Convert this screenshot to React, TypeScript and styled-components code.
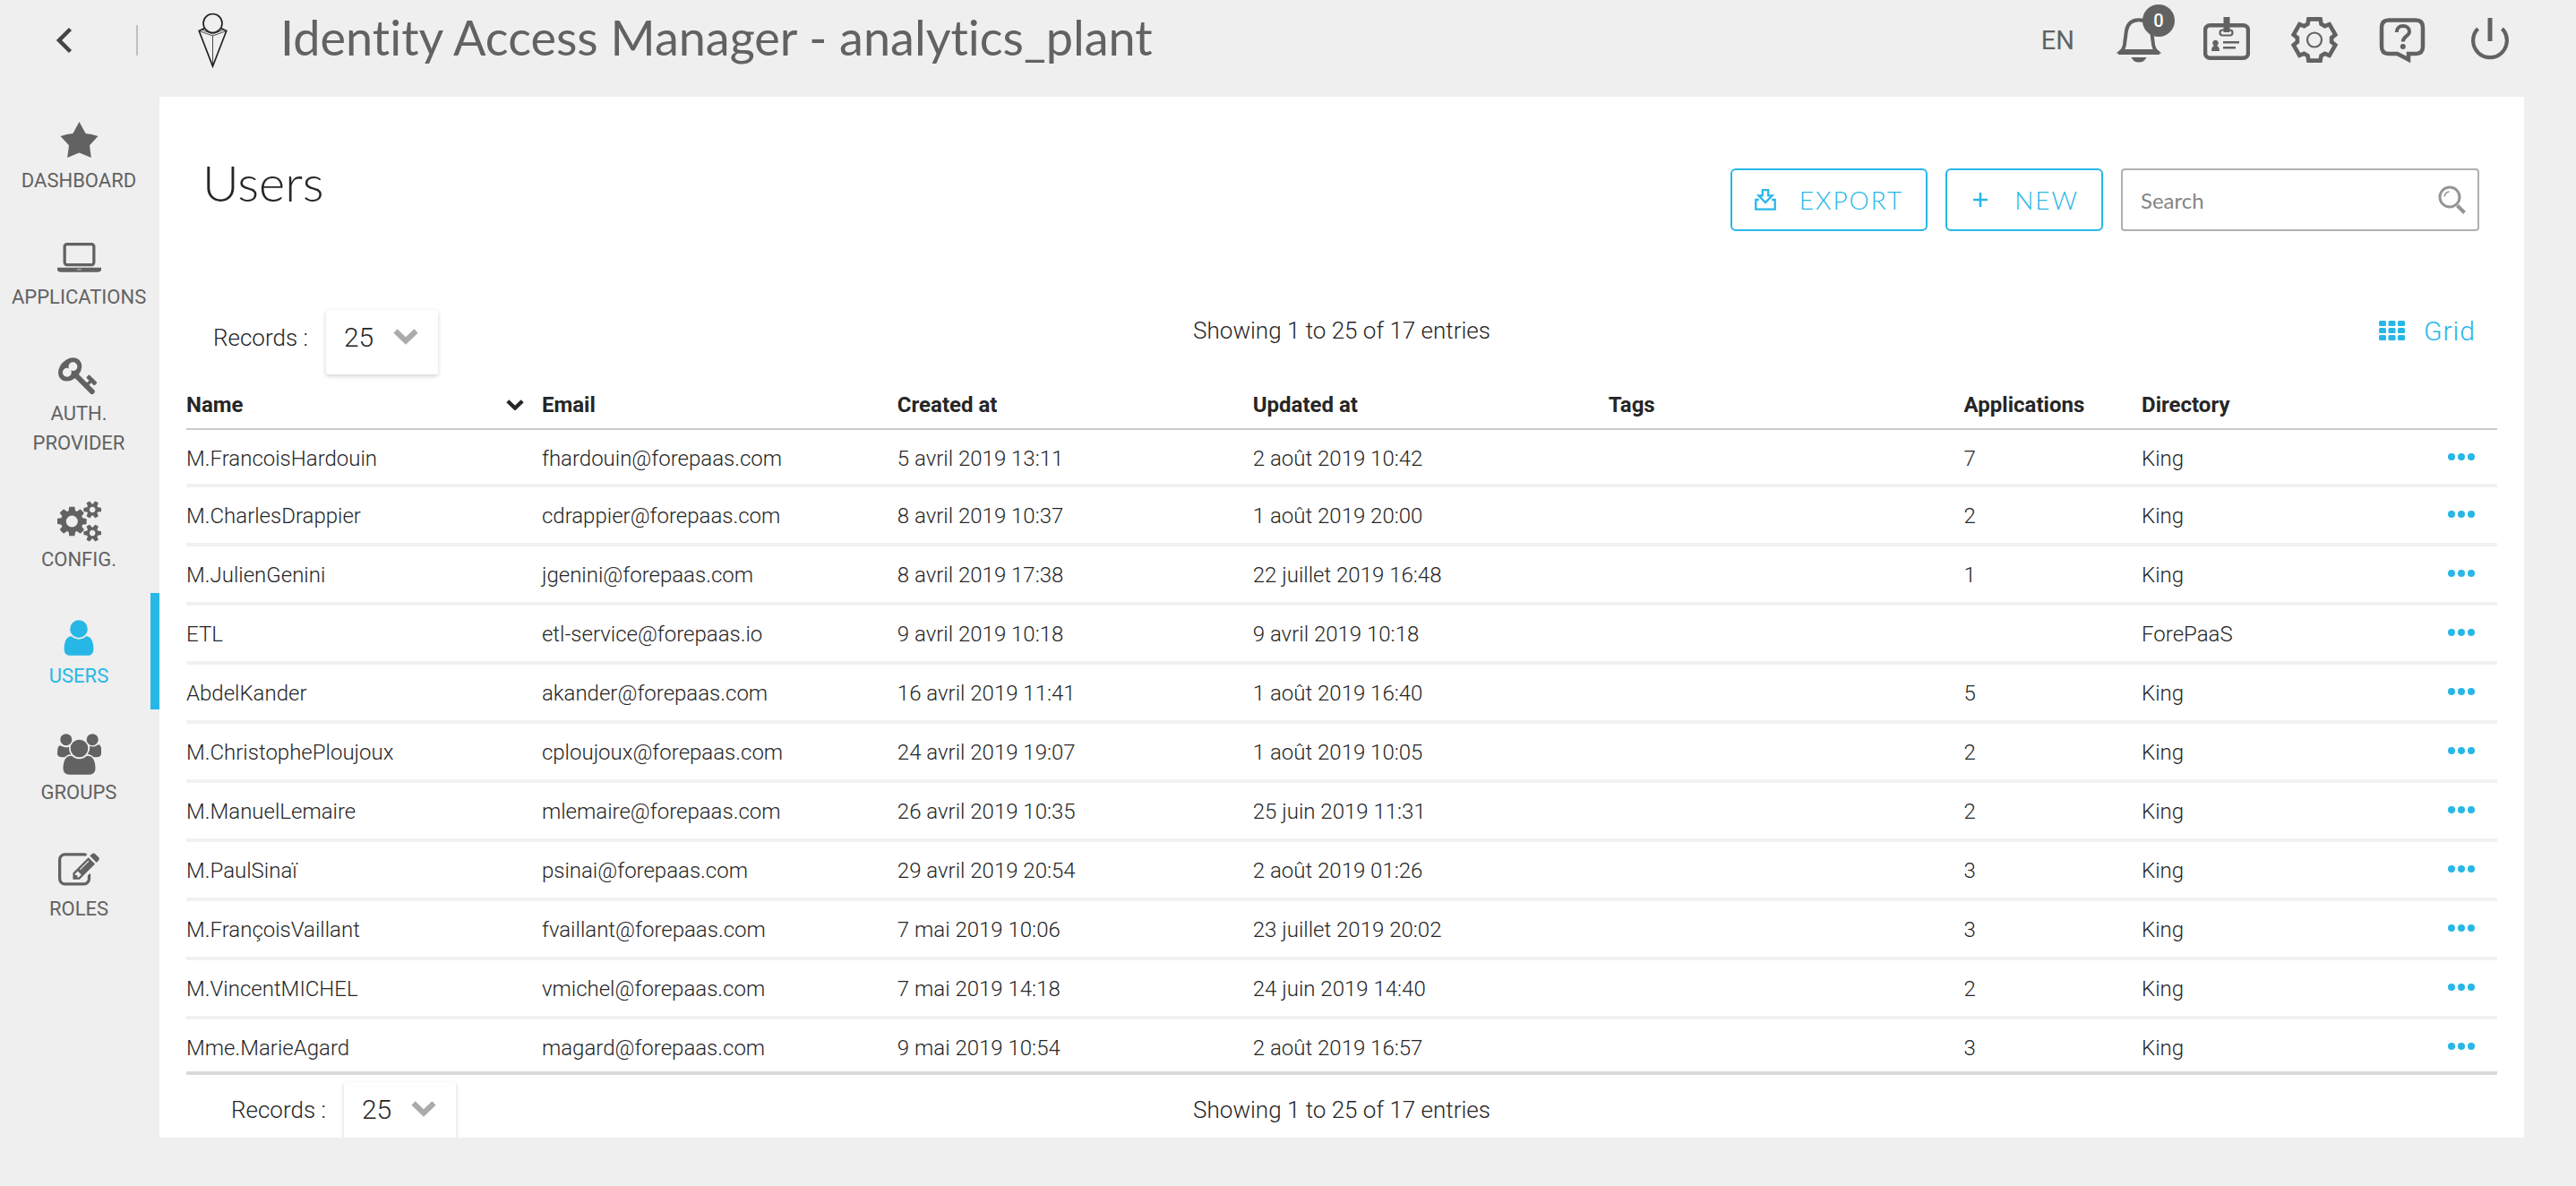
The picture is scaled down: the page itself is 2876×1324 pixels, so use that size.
import React from 'react';
import styled, { createGlobalStyle } from 'styled-components';

const color = {
  page: '#efefef',
  panel: '#ffffff',
  text: '#262626',
  muted: '#626262',
  accent: '#27b7e7',
  field: '#b0b0b0',
  headLine: '#cbcbcb',
  rowLine: '#f1f1f1',
  footLine: '#d8dad9',
};

const body = "Roboto, 'Liberation Sans', sans-serif";
const display = "Lato, 'Open Sans', sans-serif";

const GlobalStyle = createGlobalStyle`
  *, *::before, *::after { box-sizing: border-box; }
  body {
    margin: 0;
    background: ${color.page};
    color: ${color.text};
    font-family: ${body};
    font-weight: 300;
  }
  button, input, select { font: inherit; color: inherit; }
  button { padding: 0; border: 0; background: none; cursor: pointer; }
  svg { display: block; flex: none; }
`;

const Shell = styled.div`
  display: grid;
  grid-template: 108px minmax(0, 1fr) / 178px minmax(0, 1fr);
  height: 100vh;
  padding: 0 58px 54px 0;
`;

const Header = styled.header`
  grid-column: 1 / -1;
  display: flex;
  align-items: center;
  padding: 0 12px 18px 60px;
  color: ${color.muted};
`;

const Divider = styled.span`
  width: 2px;
  height: 34px;
  margin: 0 67px 0 70px;
  background: #c0c0c0;
`;

const AppTitle = styled.h1`
  flex: 1;
  margin: 0 0 0 58px;
  padding-bottom: 6px;
  font: 400 54px/70px ${display};
  font-variant-ligatures: none;
`;

const Tools = styled.nav`
  display: flex;
  align-items: center;
  gap: 46px;
`;

const Language = styled.button`
  font-size: 29px;
  font-weight: 400;
`;

const ToolButton = styled.button`
  position: relative;
  width: 52px;
  height: 52px;
`;

const Badge = styled.span`
  position: absolute;
  top: -14px;
  right: -14px;
  width: 36px;
  border-radius: 18px;
  background: ${color.muted};
  color: #fff;
  font-size: 20px;
  font-weight: 500;
  line-height: 36px;
  text-align: center;
`;

const Sidebar = styled.nav`
  display: flex;
  flex-direction: column;
  padding-top: 1px;
`;

const SideLink = styled.a<{ $active?: boolean }>`
  display: flex;
  flex-direction: column;
  align-items: center;
  gap: 3px;
  padding: 27px 2px 21px 0;
  box-shadow: ${(p) => (p.$active ? `inset -10px 0 ${color.accent}` : 'none')};
  color: ${(p) => (p.$active ? color.accent : color.muted)};
  font-size: 22px;
  font-weight: 400;
  line-height: 33px;
  text-align: center;
  text-decoration: none;
  text-transform: uppercase;
`;

const SideLabel = styled.span`
  max-width: 150px;
`;

const Panel = styled.main`
  display: flex;
  flex-direction: column;
  min-height: 0;
  padding: 0 30px;
  background: ${color.panel};
`;

const PanelHead = styled.div`
  display: flex;
  justify-content: space-between;
  padding: 61px 20px 88px 18px;
`;

const PageTitle = styled.h2`
  margin: 0;
  font: 300 56px/70px ${display};
`;

const Actions = styled.div`
  display: flex;
  gap: 20px;
  margin-top: 19px;
`;

const OutlineButton = styled.button`
  display: flex;
  align-items: center;
  gap: 26px;
  height: 70px;
  padding: 0 25px;
  border: 2px solid ${color.accent};
  border-radius: 6px;
  color: ${color.accent};
  font: 300 28px ${display};
  letter-spacing: 2px;
  text-transform: uppercase;
`;

const SearchBox = styled.form`
  display: flex;
  align-items: center;
  width: 400px;
  height: 70px;
  padding: 0 12px 0 20px;
  border: 2px solid ${color.field};
  border-radius: 4px;
`;

const SearchInput = styled.input`
  flex: 1;
  min-width: 0;
  padding: 0;
  border: 0;
  outline: 0;
  background: none;
  font: 400 24px ${display};

  &::placeholder { color: #858585; opacity: 1; }
`;

const Bar = styled.div<{ $indent: number }>`
  display: grid;
  grid-template-columns: 1fr auto 1fr;
  align-items: start;
  flex: none;
  padding-left: ${(p) => p.$indent}px;
  padding-right: ${(p) => p.$indent}px;
  font-size: 26px;
`;

const Footer = styled.footer`
  flex: none;
  height: 74px;
  padding-top: 8px;
  border-top: 4px solid ${color.footLine};
  overflow: hidden;
`;

const Records = styled.label`
  display: flex;
  gap: 20px;
  line-height: 62px;
`;

const SelectBox = styled.span`
  display: grid;
  grid-template-columns: 75px 50px;
  height: 72px;
  border-radius: 2px;
  box-shadow: 0 2px 5px rgba(0, 0, 0, 0.18);

  svg { grid-area: 1 / 2; margin-top: 21px; color: #ababab; pointer-events: none; }
`;

const Select = styled.select`
  grid-area: 1 / 1 / 2 / 3;
  padding: 0 0 10px 20px;
  border: 0;
  outline: 0;
  background: none;
  appearance: none;
  font-size: 30px;
`;

const Entries = styled.span<{ $raised?: boolean }>`
  line-height: ${(p) => (p.$raised ? 46 : 62)}px;
`;

const GridButton = styled.button`
  display: flex;
  align-items: center;
  justify-self: end;
  gap: 21px;
  height: 46px;
  margin-right: -6px;
  color: ${color.accent};
  font-size: 30px;
  letter-spacing: 1px;
`;

const TableScroll = styled.div`
  flex: 1;
  min-height: 0;
  overflow-y: auto;
  scrollbar-width: none;
`;

const Table = styled.table`
  width: 100%;
  table-layout: fixed;
  border-spacing: 0;
  font-size: 24px;
  line-height: 30px;
`;

const Col = styled.col<{ $units: number }>`
  width: calc(100% * ${(p) => p.$units} / 13);
`;

const Th = styled.th`
  padding: 19px 0 11px;
  border-bottom: 2px solid ${color.headLine};
  font-weight: 700;
  text-align: left;
`;

const SortHead = styled.span`
  display: flex;
  align-items: center;
  justify-content: space-between;
  padding-right: 20px;
`;

const Tr = styled.tr`
  &:first-child td { padding-bottom: 13px; }
`;

const Td = styled.td`
  padding: 17px 0 15px;
  border-bottom: 4px solid ${color.rowLine};
`;

const MoreButton = styled.button`
  display: block;
  margin-left: auto;
  margin-right: 25px;
  padding-bottom: 4px;
  color: ${color.accent};
`;

const Glyph = ({ d, w = 1792 }: { d: string; w?: number }) => (
  <svg height="46" width={w === 1920 ? 49 : 46} viewBox={`0 0 ${w} 1792`} fill="currentColor">
    <path d={d} />
  </svg>
);

const paths = {
  laptop:
    'M416 1216q-66 0-113-47t-47-113v-704q0-66 47-113t113-47h1088q66 0 113 47t47 113v704q0 66-47 113t-113 47h-1088zm-32-864v704q0 13 9.5 22.5t22.5 9.5h1088q13 0 22.5-9.5t9.5-22.5v-704q0-13-9.5-22.5t-22.5-9.5h-1088q-13 0-22.5 9.5t-9.5 22.5zm1376 928h160v96q0 40-47 68t-113 28h-1600q-66 0-113-28t-47-68v-96h1760zm-720 96q16 0 16-16t-16-16h-160q-16 0-16 16t16 16h160z',
  key: 'M832 512q0-80-56-136t-136-56-136 56-56 136q0 42 19 83-41-19-83-19-80 0-136 56t-56 136 56 136 136 56 136-56 56-136q0-42-19-83 41 19 83 19 80 0 136-56t56-136zm851 704q0 17-49 66t-66 49q-9 0-28.5-16t-36.5-33-38.5-40-24.5-26l-96 96 220 220q28 28 28 68 0 42-39 81t-81 39q-40 0-68-28l-671-671q-176 131-365 131-163 0-265.5-102.5t-102.5-265.5q0-160 95-313t248-248 313-95q163 0 265.5 102.5t102.5 265.5q0 189-131 365l355 355 96-96q-3-3-26-24.5t-40-38.5-33-36.5-16-28.5q0-17 49-66t66-49q13 0 23 10 6 6 46 44.5t82 79.5 86.5 86 73 78 28.5 41z',
  cogs: 'M896 896q0-106-75-181t-181-75-181 75-75 181 75 181 181 75 181-75 75-181zm768 512q0-52-38-90t-90-38-90 38-38 90q0 53 37.5 90.5t90.5 37.5 90.5-37.5 37.5-90.5zm0-1024q0-52-38-90t-90-38-90 38-38 90q0 53 37.5 90.5t90.5 37.5 90.5-37.5 37.5-90.5zm-384 421v185q0 10-7 19.5t-16 10.5l-155 24q-11 35-32 76 34 48 90 115 7 11 7 20 0 12-7 19-23 30-82.5 89.5t-78.5 59.5q-11 0-21-7l-115-90q-37 19-77 31-11 108-23 155-7 24-30 24h-186q-11 0-20-7.5t-10-17.5l-23-153q-34-10-75-31l-118 89q-7 7-20 7-11 0-21-8-144-133-144-160 0-9 7-19 10-14 41-53t47-61q-23-44-35-82l-152-24q-10-1-17-9.5t-7-19.5v-185q0-10 7-19.5t16-10.5l155-24q11-35 32-76-34-48-90-115-7-11-7-20 0-12 7-20 22-30 82-89t79-59q11 0 21 7l115 90q34-18 77-32 11-108 23-154 7-24 30-24h186q11 0 20 7.5t10 17.5l23 153q34 10 75 31l118-89q8-7 20-7 11 0 21 8 144 133 144 160 0 8-7 19-12 16-42 54t-45 60q23 48 34 82l152 23q10 2 17 10.5t7 19.5zm640 533v140q0 16-149 31-12 27-30 52 51 113 51 138 0 4-4 7-122 71-124 71-8 0-46-47t-52-68q-20 2-30 2t-30-2q-14 21-52 68t-46 47q-2 0-124-71-4-3-4-7 0-25 51-138-18-25-30-52-149-15-149-31v-140q0-16 149-31 13-29 30-52-51-113-51-138 0-4 4-7 4-2 35-20t59-34 30-16q8 0 46 46.5t52 67.5q20-2 30-2t30 2q51-71 92-112l6-2q4 0 124 70 4 3 4 7 0 25-51 138 17 23 30 52 149 15 149 31zm0-1024v140q0 16-149 31-12 27-30 52 51 113 51 138 0 4-4 7-122 71-124 71-8 0-46-47t-52-68q-20 2-30 2t-30-2q-14 21-52 68t-46 47q-2 0-124-71-4-3-4-7 0-25 51-138-18-25-30-52-149-15-149-31v-140q0-16 149-31 13-29 30-52-51-113-51-138 0-4 4-7 4-2 35-20t59-34 30-16q8 0 46 46.5t52 67.5q20-2 30-2t30 2q51-71 92-112l6-2q4 0 124 70 4 3 4 7 0 25-51 138 17 23 30 52 149 15 149 31z',
  user: 'M1536 1399q0 109-62.5 187t-150.5 78h-854q-88 0-150.5-78t-62.5-187q0-85 8.5-160.5t31.5-152 58.5-131 94-89 134.5-34.5q131 128 313 128t313-128q76 0 134.5 34.5t94 89 58.5 131 31.5 152 8.5 160.5zm-256-887q0 159-112.5 271.5t-271.5 112.5-271.5-112.5-112.5-271.5 112.5-271.5 271.5-112.5 271.5 112.5 112.5 271.5z',
  users:
    'M593 896q-162 5-265 128h-134q-82 0-138-40.5t-56-118.5q0-353 124-353 6 0 43.5 21t97.5 42.5 119 21.5q67 0 133-23-5 37-5 66 0 159 93 293zm1071 637q0 120-73 189.5t-194 69.5h-874q-121 0-194-69.5t-73-189.5q0-53 3.5-103.5t14-109 26.5-108.5 43-97.5 62-81 85.5-53.5 111.5-20q10 0 43 21.5t73 48 107 48 135 21.5 135-21.5 107-48 73-48 43-21.5q61 0 111.5 20t85.5 53.5 62 81 43 97.5 26.5 108.5 14 109 3.5 103.5zm-1024-1277q0 106-75 181t-181 75-181-75-75-181 75-181 181-75 181 75 75 181zm704 384q0 159-112.5 271.5t-271.5 112.5-271.5-112.5-112.5-271.5 112.5-271.5 271.5-112.5 271.5 112.5 112.5 271.5zm576 225q0 78-56 118.5t-138 40.5h-134q-103-123-265-128 93-134 93-293 0-29-5-66 66 23 133 23 59 0 119-21.5t97.5-42.5 43.5-21q124 0 124 353zm-128-609q0 106-75 181t-181 75-181-75-75-181 75-181 181-75 181 75 75 181z',
  edit: 'M888 1184l116-116-152-152-116 116v56h96v96h56zm440-720q-16-16-33 1l-350 350q-17 17-1 33t33-1l350-350q17-17 1-33zm80 594v190q0 119-84.5 203.5t-203.5 84.5h-832q-119 0-203.5-84.5t-84.5-203.5v-832q0-119 84.5-203.5t203.5-84.5h832q63 0 117 25 15 7 18 23 3 17-9 29l-49 49q-14 14-32 8-23-6-45-6h-832q-66 0-113 47t-47 113v832q0 66 47 113t113 47h832q66 0 113-47t47-113v-126q0-13 9-22l64-64q15-15 35-7t20 29zm-96-738l288 288-672 672h-288v-288zm444 132l-92 92-288-288 92-92q28-28 68-28t68 28l152 152q28 28 28 68t-28 68z',
};

const StarIcon = () => (
  <svg width="49" height="46" viewBox="0 0 49 46" fill="currentColor">
    <path d="M24.5 0 31.6 13Q38 13.4 45.5 16L36 26.2 37.8 40 24.5 34.6 11.2 40 13 26.2 3.5 16Q11 13.4 17.4 13Z" />
  </svg>
);

const LogoIcon = () => (
  <svg width="34" height="62" viewBox="0 0 34 62" fill="none" stroke="#222" strokeWidth="1.7">
    <circle cx="16.5" cy="12" r="10.5" />
    <path d="M7.5 17.5 1.2 20.5 16.5 60 31.8 20.5 25.5 17.5" />
    <path d="M1.2 20.5 16.5 26 31.8 20.5M16.5 26V60M5 19.5 16.5 24 28 19.5" strokeWidth="0.8" />
  </svg>
);

const BackIcon = () => (
  <svg width="22" height="30" viewBox="0 0 22 30" fill="none" stroke="#444" strokeWidth="4.5">
    <path d="M18.5 2.5 6 15 18.5 27.5" />
  </svg>
);

const BellIcon = () => (
  <svg width="52" height="52" viewBox="0 0 52 52" fill="currentColor">
    <path
      d="M6 38.5C9 36 10 33 10.3 28L12 15C13.5 7.5 18.5 3.2 26 3.2S38.5 7.5 40 15L41.7 28C42 33 43 36 46 38.5Z"
      fill="none"
      stroke="currentColor"
      strokeWidth="4"
    />
    <path d="M3 42v-3l3-3h40l3 3v3zM17.5 45h17Q32 50.5 26 50.5T17.5 45Z" />
  </svg>
);

const BadgeIcon = () => (
  <svg width="52" height="52" viewBox="0 0 52 52" fill="none" stroke="currentColor">
    <rect x="2" y="9.3" width="48" height="36.5" rx="5.5" strokeWidth="4.5" />
    <rect x="18.5" y="14.5" width="14" height="6" rx="3" fill={color.page} strokeWidth="2.2" />
    <path d="M26 0V17" strokeWidth="7" />
    <path d="M22 28.2H40M22 34.3H36" strokeWidth="2.6" />
    <path d="M9 38q0-5 3-6a3.3 3.3 0 1 1 3 0q3 1 3 6z" fill="currentColor" stroke="none" />
  </svg>
);

const gearPoints = [0, 60, 120, 180, 240, 300]
  .flatMap((tooth) => [
    [tooth - 23, 19.2],
    [tooth - 16, 24],
    [tooth + 16, 24],
    [tooth + 23, 19.2],
  ])
  .map(([deg, r]) => {
    const a = ((deg - 90) * Math.PI) / 180;
    return `${(26 + r * Math.cos(a)).toFixed(1)},${(25.5 + r * Math.sin(a)).toFixed(1)}`;
  })
  .join(' ');

const GearIcon = () => (
  <svg width="52" height="52" viewBox="0 0 52 52" fill="none" stroke="currentColor">
    <polygon points={gearPoints} strokeWidth="4.6" />
    <circle cx="26" cy="25.5" r="8" strokeWidth="2.2" />
  </svg>
);

const HelpIcon = () => (
  <svg width="52" height="52" viewBox="0 0 52 52" fill="none" stroke="currentColor" strokeWidth="4.5">
    <path d="M11 3.5H41Q49 3.5 49 11.5V33Q49 41 41 41H33V47.5L20.5 41H11Q3 41 3 33V11.5Q3 3.5 11 3.5Z" />
    <path d="M19.8 17C19.8 12.5 22.5 10 26.8 10S34 12.5 34 16.3C34 21.5 26.8 21.5 26.8 27.5" strokeWidth="4" />
    <circle cx="26.8" cy="33" r="3" fill="currentColor" stroke="none" />
  </svg>
);

const PowerIcon = () => (
  <svg width="52" height="52" viewBox="0 0 52 52" fill="none" stroke="currentColor">
    <path d="M26 1V27" strokeWidth="5" />
    <path d="M12.5 13A18.9 18.9 0 1 0 39.5 13" strokeWidth="4.2" />
  </svg>
);

const ExportIcon = () => (
  <svg width="24" height="24" viewBox="0 0 24 24" fill="none" stroke="currentColor" strokeWidth="2.3">
    <path d="M4.8 12H1.3V22.7H22.7V12H19.2" />
    <path d="M8.8 1.2h6.4v6.2h4.3L12 15 4.5 7.4h4.3z" />
  </svg>
);

const PlusIcon = () => (
  <svg width="24" height="24" viewBox="0 0 24 24" stroke="currentColor" strokeWidth="2.6">
    <path d="M12 4V20M4 12H20" />
  </svg>
);

const SearchIcon = () => (
  <svg width="32" height="32" viewBox="0 0 32 32" fill="none" stroke="#959595">
    <circle cx="13" cy="13" r="11" strokeWidth="3" />
    <path d="M21.5 22.5 29.5 30.5" strokeWidth="4" />
    <path d="M7 12.5Q8 7.5 12.5 7" strokeWidth="1.5" />
  </svg>
);

const ChevronIcon = ({ width, stroke }: { width: number; stroke: number }) => (
  <svg width={width} height={(width * 18) / 28} viewBox="0 0 28 18" fill="none" stroke="currentColor" strokeWidth={stroke}>
    <path d="M2.5 2.5 14 13.5 25.5 2.5" />
  </svg>
);

const GridIcon = () => (
  <svg width="29" height="22" viewBox="0 0 29 22" fill="currentColor">
    {[0, 8, 16].map((y) =>
      [0, 10.5, 21].map((x) => <rect key={`${x}-${y}`} x={x} y={y} width="8" height="6" rx="1.5" />),
    )}
  </svg>
);

const DotsIcon = () => (
  <svg width="30" height="8" viewBox="0 0 30 8" fill="currentColor">
    <circle cx="4" cy="4" r="4" />
    <circle cx="15" cy="4" r="4" />
    <circle cx="26" cy="4" r="4" />
  </svg>
);

const menu = [
  { label: 'Dashboard', icon: <StarIcon /> },
  { label: 'Applications', icon: <Glyph d={paths.laptop} w={1920} /> },
  { label: 'Auth. Provider', icon: <Glyph d={paths.key} /> },
  { label: 'Config.', icon: <Glyph d={paths.cogs} w={1920} /> },
  { label: 'Users', icon: <Glyph d={paths.user} />, active: true },
  { label: 'Groups', icon: <Glyph d={paths.users} w={1920} /> },
  { label: 'Roles', icon: <Glyph d={paths.edit} /> },
];

const users = [
  ['M.FrancoisHardouin', 'fhardouin@forepaas.com', '5 avril 2019 13:11', '2 août 2019 10:42', '', '7', 'King'],
  ['M.CharlesDrappier', 'cdrappier@forepaas.com', '8 avril 2019 10:37', '1 août 2019 20:00', '', '2', 'King'],
  ['M.JulienGenini', 'jgenini@forepaas.com', '8 avril 2019 17:38', '22 juillet 2019 16:48', '', '1', 'King'],
  ['ETL', 'etl-service@forepaas.io', '9 avril 2019 10:18', '9 avril 2019 10:18', '', '', 'ForePaaS'],
  ['AbdelKander', 'akander@forepaas.com', '16 avril 2019 11:41', '1 août 2019 16:40', '', '5', 'King'],
  ['M.ChristophePloujoux', 'cploujoux@forepaas.com', '24 avril 2019 19:07', '1 août 2019 10:05', '', '2', 'King'],
  ['M.ManuelLemaire', 'mlemaire@forepaas.com', '26 avril 2019 10:35', '25 juin 2019 11:31', '', '2', 'King'],
  ['M.PaulSinaï', 'psinai@forepaas.com', '29 avril 2019 20:54', '2 août 2019 01:26', '', '3', 'King'],
  ['M.FrançoisVaillant', 'fvaillant@forepaas.com', '7 mai 2019 10:06', '23 juillet 2019 20:02', '', '3', 'King'],
  ['M.VincentMICHEL', 'vmichel@forepaas.com', '7 mai 2019 14:18', '24 juin 2019 14:40', '', '2', 'King'],
  ['Mme.MarieAgard', 'magard@forepaas.com', '9 mai 2019 10:54', '2 août 2019 16:57', '', '3', 'King'],
];

const RecordsPicker = () => (
  <Records>
    Records :
    <SelectBox>
      <Select defaultValue="25">
        <option>25</option>
        <option>50</option>
        <option>100</option>
      </Select>
      <ChevronIcon width={28} stroke={6} />
    </SelectBox>
  </Records>
);

const tools = [
  { label: 'Notifications', icon: <BellIcon />, count: 0 },
  { label: 'Profile', icon: <BadgeIcon /> },
  { label: 'Settings', icon: <GearIcon /> },
  { label: 'Help', icon: <HelpIcon /> },
  { label: 'Log out', icon: <PowerIcon /> },
];

export default function App() {
  return (
    <Shell>
      <GlobalStyle />
      <Header>
        <button type="button" aria-label="Back">
          <BackIcon />
        </button>
        <Divider />
        <LogoIcon />
        <AppTitle>Identity Access Manager - analytics_plant</AppTitle>
        <Tools>
          <Language type="button">EN</Language>
          {tools.map((t) => (
            <ToolButton key={t.label} type="button" aria-label={t.label}>
              {t.icon}
              {t.count !== undefined && <Badge>{t.count}</Badge>}
            </ToolButton>
          ))}
        </Tools>
      </Header>

      <Sidebar>
        {menu.map((m) => (
          <SideLink key={m.label} href="#" $active={m.active}>
            {m.icon}
            <SideLabel>{m.label}</SideLabel>
          </SideLink>
        ))}
      </Sidebar>

      <Panel>
        <PanelHead>
          <PageTitle>Users</PageTitle>
          <Actions>
            <OutlineButton type="button">
              <ExportIcon />
              Export
            </OutlineButton>
            <OutlineButton type="button">
              <PlusIcon />
              New
            </OutlineButton>
            <SearchBox role="search">
              <SearchInput type="text" aria-label="Search" placeholder="Search" />
              <SearchIcon />
            </SearchBox>
          </Actions>
        </PanelHead>

        <Bar $indent={30}>
          <RecordsPicker />
          <Entries $raised>Showing 1 to 25 of 17 entries</Entries>
          <GridButton type="button">
            <GridIcon />
            Grid
          </GridButton>
        </Bar>

        <TableScroll>
          <Table>
            <colgroup>
              {[2, 2, 2, 2, 2, 1, 1, 1].map((u, i) => (
                <Col key={i} $units={u} />
              ))}
            </colgroup>
            <thead>
              <tr>
                <Th>
                  <SortHead>
                    Name
                    <ChevronIcon width={20} stroke={6} />
                  </SortHead>
                </Th>
                <Th>Email</Th>
                <Th>Created at</Th>
                <Th>Updated at</Th>
                <Th>Tags</Th>
                <Th>Applications</Th>
                <Th>Directory</Th>
                <Th aria-label="Actions" />
              </tr>
            </thead>
            <tbody>
              {users.map((row) => (
                <Tr key={row[0]}>
                  {row.map((cell, i) => (
                    <Td key={i}>{cell}</Td>
                  ))}
                  <Td>
                    <MoreButton type="button" aria-label={`Actions for ${row[0]}`}>
                      <DotsIcon />
                    </MoreButton>
                  </Td>
                </Tr>
              ))}
            </tbody>
          </Table>
        </TableScroll>

        <Footer>
          <Bar $indent={50}>
            <RecordsPicker />
            <Entries>Showing 1 to 25 of 17 entries</Entries>
          </Bar>
        </Footer>
      </Panel>
    </Shell>
  );
}
